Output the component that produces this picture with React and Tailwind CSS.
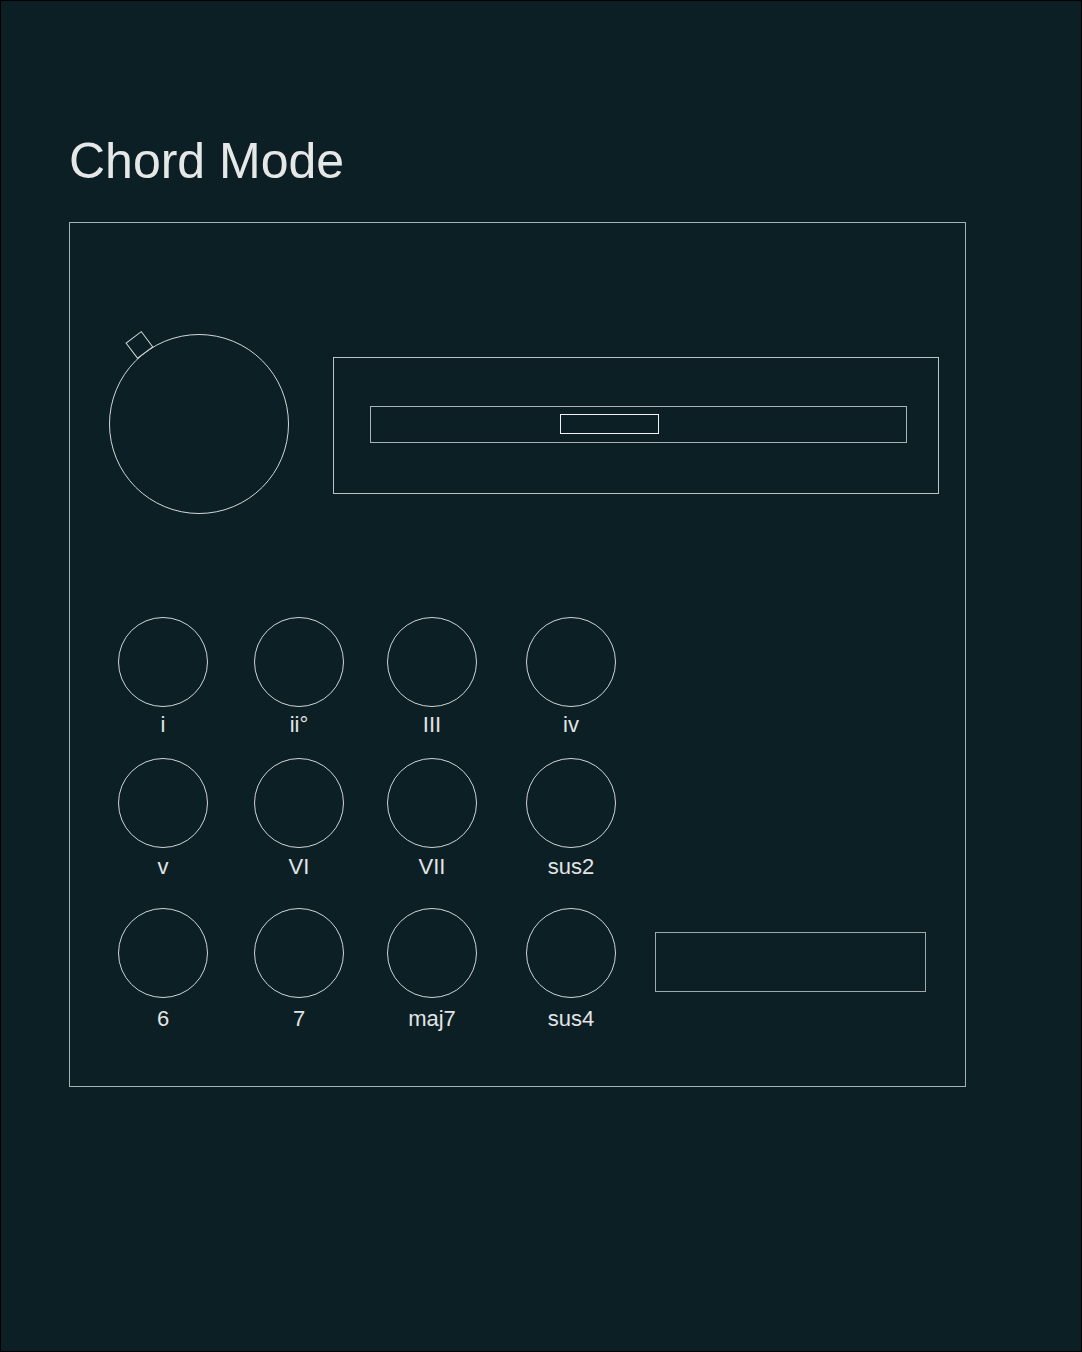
import React from 'react';

const rows = [
  ['i', 'ii°', 'III', 'iv'],
  ['v', 'VI', 'VII', 'sus2'],
  ['6', '7', 'maj7', 'sus4'],
];

const gaps = ['ml-[48px]', 'ml-[46px]', 'ml-[43px]', 'ml-[49px]'];
const rowTops = ['mt-[93px]', 'mt-[20px]', 'mt-[28px]'];
const labelTops = ['mt-[5px]', 'mt-[6px]', 'mt-[8px]'];

const Knob = () => (
  <svg width="200" height="200" viewBox="0 0 200 200" className="ml-[29px] mt-[101px] shrink-0">
    <circle cx="100" cy="100" r="89.5" fill="none" stroke="#d3d8d9" strokeWidth="1" />
    <rect
      x="-9.5"
      y="-9.5"
      width="19"
      height="19"
      fill="#0c1f24"
      stroke="#d3d8d9"
      strokeWidth="1"
      transform="translate(100 100) rotate(-37) translate(0 -99)"
    />
  </svg>
);

const Pad = ({ label, className, labelTop }) => (
  <div className={`flex w-[90px] flex-col items-center ${className}`}>
    <div className="h-[90px] w-[90px] rounded-full border border-[#cfd5d6]" />
    <span className={`${labelTop} text-[22px] leading-[26px] text-[#e2e4e4]`}>{label}</span>
  </div>
);

const App = () => {
  return (
    <div
      className="h-[1352px] w-[1082px] border border-black bg-[#0c1f24] pl-[68px] pt-[135px]"
      style={{ fontFamily: '"Liberation Sans", Arial, sans-serif' }}
    >
      <h1 className="text-[50px] leading-[50px] font-normal text-[#e6e8e8]">Chord Mode</h1>

      <div className="mt-[36px] flex h-[865px] w-[897px] flex-col border border-[#a7b0b2]">
        <div className="flex items-start">
          <Knob />
          <div className="ml-[34px] mt-[134px] h-[137px] w-[606px] border border-[#bcc3c5]">
            <div className="ml-[36px] mt-[48px] h-[37px] w-[537px] border border-[#aab2b4]">
              <div className="ml-[189px] mt-[7px] h-[20px] w-[99px] border border-[#f0f2f2]" />
            </div>
          </div>
        </div>

        {rows.map((row, r) => (
          <div key={r} className={`flex items-start ${rowTops[r]}`}>
            {row.map((label, i) => (
              <Pad key={label} label={label} className={gaps[i]} labelTop={labelTops[r]} />
            ))}
            {r === 2 && (
              <div className="ml-[39px] mt-[24px] h-[60px] w-[271px] border border-[#9fa8aa]" />
            )}
          </div>
        ))}
      </div>
    </div>
  );
};

export default App;
